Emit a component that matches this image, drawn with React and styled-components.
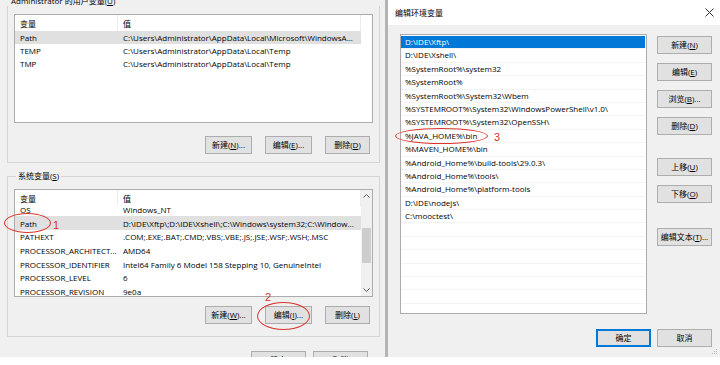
import React from 'react';
import styled, { createGlobalStyle } from 'styled-components';

const GlobalStyle = createGlobalStyle`
  html, body { margin: 0; padding: 0; background: #ffffff; }
  body { font-family: "Open Sans", "Noto Sans CJK SC", sans-serif; }
  #root { width: 720px; height: 365px; overflow: hidden; }
`;

const Screen = styled.div`
  position: relative;
  display: flex;
  width: 720px;
  height: 357px;
  font-size: 8px;
  color: #000;
  overflow: hidden;
`;

/* ---------- left dialog ---------- */
const EnvDialog = styled.section`
  flex: none;
  width: 385px;
  box-sizing: border-box;
  padding-left: 7px;
  background: #f0f0f0;
  display: flex;
  flex-direction: column;
  overflow: hidden;
`;

const ClippedLabel = styled.div`
  margin-top: -4px;
  padding-left: 4px;
  height: 10px;
  line-height: 10px;
  white-space: nowrap;
`;

const OpenGroup = styled.div`
  width: 373px;
  box-sizing: border-box;
  border: 1px solid #d5d5d5;
  border-top: none;
  padding: 8px 6px 8px 6px;
`;

const Group = styled.fieldset`
  width: 373px;
  box-sizing: border-box;
  margin: 8px 0 0 0;
  border: 1px solid #d5d5d5;
  padding: 8px 6px 12px 6px;
  min-width: 0;
`;

const Legend = styled.legend`
  padding: 0 2px;
  margin-left: 2px;
  line-height: 10px;
  font-size: 8px;
`;

const ListBox = styled.div`
  height: ${p => p.$h}px;
  box-sizing: border-box;
  background: #fff;
  border: 1px solid #acacac;
  display: flex;
  overflow: hidden;
`;

const ListMain = styled.div`
  flex: 1;
  display: flex;
  flex-direction: column;
  overflow: hidden;
`;

const GridRow = styled.div`
  display: grid;
  grid-template-columns: 103px 243px;
  width: 346px;
  height: ${p => p.$h}px;
  flex: none;
  align-items: center;
  background: ${p => (p.$sel ? '#e0e0e0' : 'transparent')};
`;

const HeaderRow = styled(GridRow)`
  position: relative;
  z-index: 1;
  background: #fff;
`;

const Cell = styled.div`
  padding-left: 5px;
  white-space: nowrap;
  overflow: hidden;
  line-height: 13px;
`;

const HeadCell = styled(Cell)`
  border-right: 1px solid #ececec;
  height: 100%;
  display: flex;
  align-items: center;
`;

const ListBody = styled.div`
  flex: 1;
  overflow: hidden;
`;

const Scrolled = styled.div`
  margin-top: ${p => p.$offset}px;
`;

const ScrollBar = styled.div`
  width: 11px;
  flex: none;
  background: #f0f0f0;
  display: flex;
  flex-direction: column;
  align-items: center;
`;

const Arrow = styled.div`
  height: 12px;
  width: 100%;
  display: flex;
  align-items: center;
  justify-content: center;
  flex: none;
`;

const Thumb = styled.div`
  margin-top: ${p => p.$top}px;
  width: 9px;
  height: ${p => p.$h}px;
  background: #cdcdcd;
  flex: none;
`;

const Spacer = styled.div`
  flex: 1;
`;

const ButtonRow = styled.div`
  display: flex;
  justify-content: flex-end;
  gap: ${p => p.$gap || 7}px;
  margin-top: ${p => p.$mt || 0}px;
  padding-right: ${p => p.$pr || 0}px;
`;

const Btn = styled.button`
  flex: none;
  width: ${p => p.$w || 55}px;
  height: 18px;
  box-sizing: border-box;
  padding: 0;
  margin: 0;
  background: #e1e1e1;
  border: 1px solid ${p => (p.$default ? '#0078d7' : '#adadad')};
  box-shadow: ${p => (p.$default ? 'inset 0 0 0 1px #0078d7' : 'none')};
  font-family: inherit;
  font-size: 8px;
  color: #000;
  line-height: 16px;
  white-space: nowrap;
`;

/* ---------- right dialog ---------- */
const EditDialog = styled.section`
  flex: 1;
  border-left: 3px solid #b4b4b4;
  background: #f0f0f0;
  display: flex;
  flex-direction: column;
  position: relative;
`;

const TitleBar = styled.div`
  height: 25px;
  flex: none;
  background: #fff;
  display: flex;
  align-items: center;
  justify-content: space-between;
  padding: 0 6px 0 7px;
`;

const Body = styled.div`
  display: flex;
  gap: 10px;
  padding: 9px 8px 0 12px;
`;

const PathList = styled.div`
  width: 247px;
  height: 280px;
  box-sizing: border-box;
  background: #fff;
  border: 1px solid #acacac;
  padding: 1px 1px 0 0;
  overflow: hidden;
`;

const PathRow = styled.div`
  height: 13.4px;
  box-sizing: border-box;
  border-bottom: 1px solid #f3f3f3;
  padding-left: 4px;
  line-height: 12.4px;
  white-space: nowrap;
  background: ${p => (p.$sel ? '#0078d7' : 'transparent')};
  color: ${p => (p.$sel ? '#fff' : '#000')};
`;

const SideButtons = styled.div`
  display: flex;
  flex-direction: column;
  gap: 9px;
  padding-top: 2px;
`;

const Footer = styled.div`
  display: flex;
  justify-content: flex-end;
  gap: 6px;
  padding: 15px 8px 0 0;
`;

const Grip = styled.svg`
  position: absolute;
  right: 2px;
  bottom: 2px;
`;

/* ---------- annotations ---------- */
const Ring = styled.div`
  position: absolute;
  left: ${p => p.$x}px;
  top: ${p => p.$y}px;
  width: ${p => p.$w}px;
  height: ${p => p.$h}px;
  box-sizing: border-box;
  border: 1.5px solid #d8352b;
  border-radius: 50%;
  pointer-events: none;
`;

const Mark = styled.span`
  position: absolute;
  left: ${p => p.$x}px;
  top: ${p => p.$y}px;
  font-family: "Liberation Sans", sans-serif;
  font-size: 11px;
  line-height: 11px;
  color: #d8352b;
`;

const userVars = [
  ['Path', 'C:\\Users\\Administrator\\AppData\\Local\\Microsoft\\WindowsA...', true],
  ['TEMP', 'C:\\Users\\Administrator\\AppData\\Local\\Temp'],
  ['TMP', 'C:\\Users\\Administrator\\AppData\\Local\\Temp'],
];

const sysVars = [
  ['OS', 'Windows_NT'],
  ['Path', 'D:\\IDE\\Xftp\\;D:\\IDE\\Xshell\\;C:\\Windows\\system32;C:\\Window...', true],
  ['PATHEXT', '.COM;.EXE;.BAT;.CMD;.VBS;.VBE;.JS;.JSE;.WSF;.WSH;.MSC'],
  ['PROCESSOR_ARCHITECT...', 'AMD64'],
  ['PROCESSOR_IDENTIFIER', 'Intel64 Family 6 Model 158 Stepping 10, GenuineIntel'],
  ['PROCESSOR_LEVEL', '6'],
  ['PROCESSOR_REVISION', '9e0a'],
  ['PSModulePath', '%ProgramFiles%\\WindowsPowerShell\\Modules;...'],
];

const paths = [
  'D:\\IDE\\Xftp\\',
  'D:\\IDE\\Xshell\\',
  '%SystemRoot%\\system32',
  '%SystemRoot%',
  '%SystemRoot%\\System32\\Wbem',
  '%SYSTEMROOT%\\System32\\WindowsPowerShell\\v1.0\\',
  '%SYSTEMROOT%\\System32\\OpenSSH\\',
  '%JAVA_HOME%\\bin',
  '%MAVEN_HOME%\\bin',
  '%Android_Home%\\build-tools\\29.0.3\\',
  '%Android_Home%\\tools\\',
  '%Android_Home%\\platform-tools',
  'D:\\IDE\\nodejs\\',
  'C:\\mooctest\\',
  '', '', '', '', '', '', '',
];

const Chevron = ({ up }) => (
  <svg width="7" height="4" viewBox="0 0 7 4">
    <path d={up ? 'M0.5 3.5 L3.5 0.5 L6.5 3.5' : 'M0.5 0.5 L3.5 3.5 L6.5 0.5'} fill="none" stroke="#606060" strokeWidth="1" />
  </svg>
);

const Header = () => (
  <HeaderRow $h={16}>
    <HeadCell>变量</HeadCell>
    <HeadCell>值</HeadCell>
  </HeaderRow>
);

const Acc = ({ label, k, tail = '' }) => (
  <>
    {label}(<u>{k}</u>){tail}
  </>
);

export default function App() {
  return (
    <>
      <GlobalStyle />
      <Screen>
        <EnvDialog>
          <ClippedLabel>
            Administrator 的用户变量(<u>U</u>)
          </ClippedLabel>
          <OpenGroup>
            <ListBox $h={109}>
              <ListMain>
                <Header />
                {userVars.map(([k, v, sel]) => (
                  <GridRow key={k} $h={13.2} $sel={sel}>
                    <Cell>{k}</Cell>
                    <Cell>{v}</Cell>
                  </GridRow>
                ))}
              </ListMain>
            </ListBox>
            <ButtonRow $mt={13} $gap={13} $pr={3}>
              <Btn $w={47}><Acc label="新建" k="N" tail="..." /></Btn>
              <Btn $w={47}><Acc label="编辑" k="E" tail="..." /></Btn>
              <Btn $w={45}><Acc label="删除" k="D" /></Btn>
            </ButtonRow>
          </OpenGroup>

          <Group>
            <Legend>
              系统变量(<u>S</u>)
            </Legend>
            <ListBox $h={108}>
              <ListMain>
                <Header />
                <ListBody>
                  <Scrolled $offset={-3.5}>
                    {sysVars.map(([k, v, sel]) => (
                      <GridRow key={k} $h={13.7} $sel={sel}>
                        <Cell>{k}</Cell>
                        <Cell>{v}</Cell>
                      </GridRow>
                    ))}
                  </Scrolled>
                </ListBody>
              </ListMain>
              <ScrollBar>
                <Arrow><Chevron up /></Arrow>
                <Thumb $top={26} $h={35} />
                <Spacer />
                <Arrow><Chevron /></Arrow>
              </ScrollBar>
            </ListBox>
            <ButtonRow $mt={9} $gap={13} $pr={3}>
              <Btn $w={47}><Acc label="新建" k="W" tail="..." /></Btn>
              <Btn $w={47}><Acc label="编辑" k="I" tail="..." /></Btn>
              <Btn $w={45}><Acc label="删除" k="L" /></Btn>
            </ButtonRow>
          </Group>

          <ButtonRow $mt={14} $gap={7} $pr={17}>
            <Btn>确定</Btn>
            <Btn>取消</Btn>
          </ButtonRow>
        </EnvDialog>

        <EditDialog>
          <TitleBar>
            <span>编辑环境变量</span>
            <svg width="9" height="9" viewBox="0 0 9 9">
              <path d="M0.5 0.5 L8.5 8.5 M8.5 0.5 L0.5 8.5" stroke="#333" strokeWidth="1" />
            </svg>
          </TitleBar>
          <Body>
            <PathList>
              {paths.map((p, i) => (
                <PathRow key={i} $sel={i === 0}>{p}</PathRow>
              ))}
            </PathList>
            <SideButtons>
              <Btn><Acc label="新建" k="N" /></Btn>
              <Btn><Acc label="编辑" k="E" /></Btn>
              <Btn><Acc label="浏览" k="B" tail="..." /></Btn>
              <Btn><Acc label="删除" k="D" /></Btn>
              <Btn style={{ marginTop: 14 }}><Acc label="上移" k="U" /></Btn>
              <Btn><Acc label="下移" k="O" /></Btn>
              <Btn style={{ marginTop: 16 }}><Acc label="编辑文本" k="T" tail="..." /></Btn>
            </SideButtons>
          </Body>
          <Footer>
            <Btn $default>确定</Btn>
            <Btn>取消</Btn>
          </Footer>
          <Grip width="6" height="6" viewBox="0 0 6 6">
            <rect x="4" y="0" width="1" height="1" fill="#bbb" />
            <rect x="2" y="2" width="1" height="1" fill="#bbb" />
            <rect x="4" y="2" width="1" height="1" fill="#bbb" />
            <rect x="0" y="4" width="1" height="1" fill="#bbb" />
            <rect x="2" y="4" width="1" height="1" fill="#bbb" />
            <rect x="4" y="4" width="1" height="1" fill="#bbb" />
          </Grip>
        </EditDialog>

        <Ring $x={4} $y={213} $w={47} $h={20} />
        <Mark $x={53} $y={220}>1</Mark>
        <Ring $x={257} $y={302} $w={53} $h={28} />
        <Mark $x={265} $y={292}>2</Mark>
        <Ring $x={395} $y={128} $w={93} $h={16} />
        <Mark $x={494} $y={132}>3</Mark>
      </Screen>
    </>
  );
}
